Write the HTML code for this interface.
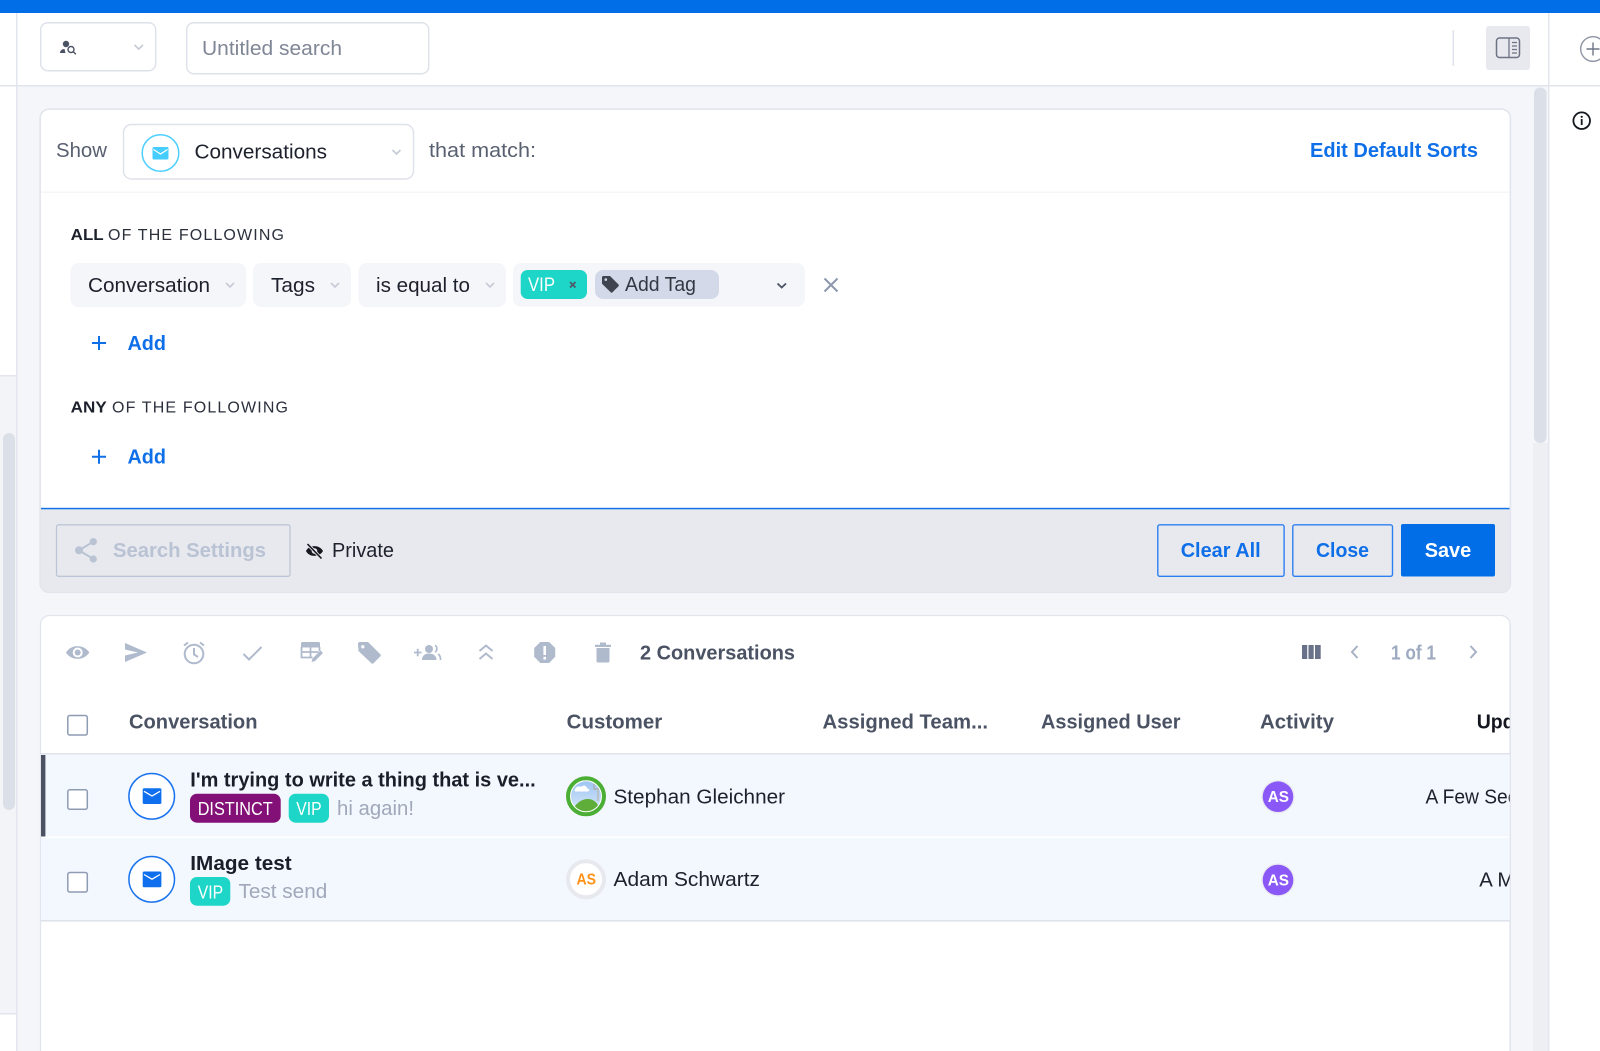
<!DOCTYPE html>
<html lang="en">
<head>
<meta charset="utf-8">
<title>Search</title>
<style>
html,body{margin:0;padding:0;width:1600px;height:1051px;overflow:hidden;background:#fff}
svg{display:block;position:absolute;left:0;top:0}
text{font-family:"Liberation Sans",sans-serif;font-size:20px;fill:#1d212c;letter-spacing:0}
.b{font-weight:700}
.blue{fill:#0e6fe8;font-weight:700}
.hd{font-weight:700;fill:#4a5263}
.sm{font-size:16px}
.tag{font-size:18.5px;fill:#fff}
.muted{fill:#a0a8ba}
.chev{fill:none;stroke:#c5cad5;stroke-width:1.6}
.ic{fill:#b0bacd}
.is{fill:none;stroke:#b0bacd;stroke-width:2}
</style>
</head>
<body>
<svg width="1600" height="1051" viewBox="0 0 1600 1051" xmlns="http://www.w3.org/2000/svg">
<defs>
<clipPath id="tbl"><rect x="41" y="616" width="1469" height="435"/></clipPath>
<clipPath id="av"><circle cx="586" cy="796.3" r="15"/></clipPath>
<linearGradient id="sky" x1="0" y1="0" x2="0" y2="1"><stop offset="0" stop-color="#9cc4f2"/><stop offset="1" stop-color="#d9e8fa"/></linearGradient>
</defs>

<rect width="1600" height="1051" fill="#fff"/>
<!-- main background -->
<rect x="17" y="86" width="1531" height="965" fill="#f5f6fa"/>
<!-- left column -->
<rect x="0" y="376" width="16" height="637" fill="#f3f4f7"/>
<rect x="0" y="375" width="16" height="1.5" fill="#e3e6ee"/>
<rect x="0" y="1013" width="16" height="1.5" fill="#e3e6ee"/>
<rect x="3" y="433" width="12" height="377" rx="6" fill="#dbdfe8"/>
<rect x="16" y="13" width="1.5" height="1038" fill="#e3e6ee"/>
<!-- top bar -->
<rect width="1600" height="13" fill="#016ee8"/>
<!-- header line -->
<rect x="0" y="85" width="1600" height="1.5" fill="#e1e4ec"/>
<rect x="1548" y="13" width="1.5" height="1038" fill="#e3e6ee"/>

<!-- header controls -->
<rect x="40.7" y="22.7" width="115" height="48" rx="7" fill="#fff" stroke="#dfe2ea" stroke-width="1.5"/>
<circle cx="66" cy="44" r="3.2" fill="#4a5263"/>
<path d="M60 53c0-2.500 2-4 4.500-4l1 4z" fill="#4a5263"/>
<circle cx="71" cy="49.5" r="3" fill="none" stroke="#4a5263" stroke-width="1.400"/>
<path d="M73.300 51.800l2.500 2.500" stroke="#4a5263" stroke-width="1.400" fill="none"/>
<polyline class="chev" points="134.500,45 138.700,49 143,45"/>
<rect x="186.7" y="22.7" width="242" height="51" rx="7" fill="#fff" stroke="#dfe2ea" stroke-width="1.5"/>
<text x="202" y="55" style="fill:#7f8695" textLength="140" lengthAdjust="spacingAndGlyphs">Untitled search</text>
<rect x="1452.500" y="30" width="1.500" height="36" fill="#dfe3ec"/>
<rect x="1486" y="26" width="44" height="44" rx="3" fill="#e8e9ef"/>
<rect x="1496.500" y="38" width="23" height="19.500" rx="3" fill="none" stroke="#6c7385" stroke-width="1.500"/>
<path d="M1509 38v19.500M1512 42.500h5M1512 46h5M1512 49.500h5M1512 53h5" stroke="#6c7385" stroke-width="1.300" fill="none"/>
<circle cx="1593" cy="49" r="12.300" fill="none" stroke="#8d94a3" stroke-width="1.400"/>
<path d="M1593 42.500v13M1586.500 49h13" stroke="#6f7686" stroke-width="1.400" fill="none"/>
<circle cx="1581.700" cy="120.700" r="8.300" fill="none" stroke="#15181f" stroke-width="1.800"/>
<circle cx="1581.700" cy="116.800" r="1.100" fill="#15181f"/>
<rect x="1580.800" y="119" width="1.800" height="6" fill="#15181f"/>

<!-- scrollbar -->
<rect x="1533" y="443" width="15" height="608" fill="#eeeff3"/>
<rect x="1534" y="87.500" width="12.500" height="355.500" rx="6" fill="#dbdfe8"/>

<!-- panel 1 -->
<rect x="40" y="109" width="1470.500" height="483.500" rx="9" fill="#e8e9ef" stroke="#e2e5ed" stroke-width="1.300"/>
<path d="M41 509V118a8 8 0 0 1 8-8H1501.500a8 8 0 0 1 8 8V509z" fill="#fff"/>
<rect x="41" y="191.500" width="1468.500" height="1.500" fill="#f5f6f9"/>
<rect x="41" y="507.800" width="1468.500" height="1.500" fill="#0f72e8"/>

<text x="56" y="157" style="fill:#596070" textLength="51" lengthAdjust="spacingAndGlyphs">Show</text>
<rect x="123.500" y="124.500" width="290" height="54.500" rx="8" fill="#fff" stroke="#dfe2ea" stroke-width="1.500"/>
<circle cx="160.500" cy="153" r="18.300" fill="#fff" stroke="#4dcfff" stroke-width="1.500"/>
<rect x="152.500" y="147" width="16" height="12.500" rx="1.500" fill="#45cdff"/>
<polyline points="153.500,149.500 160.500,154 167.500,149.500" fill="none" stroke="#fff" stroke-width="1.200"/>
<text x="194.500" y="158.500" textLength="132.500" lengthAdjust="spacingAndGlyphs">Conversations</text>
<polyline class="chev" points="392.500,150 396.500,154 400.500,150"/>
<text x="429" y="157" style="fill:#596070" textLength="107" lengthAdjust="spacingAndGlyphs">that match:</text>
<text x="1310" y="157" class="blue" textLength="168" lengthAdjust="spacingAndGlyphs">Edit Default Sorts</text>

<text x="70.700" y="240" class="b sm" textLength="33" lengthAdjust="spacingAndGlyphs">ALL</text>
<text x="108" y="240" class="sm" style="fill:#2b303c" textLength="176" lengthAdjust="spacing">OF THE FOLLOWING</text>

<!-- filter pills -->
<rect x="70.500" y="263" width="175.500" height="44" rx="8" fill="#f5f6fa"/>
<text x="88" y="292" textLength="122" lengthAdjust="spacingAndGlyphs">Conversation</text>
<polyline class="chev" points="226,283 230,287 234,283"/>
<rect x="253" y="263" width="98" height="44" rx="8" fill="#f5f6fa"/>
<text x="271" y="292" textLength="44" lengthAdjust="spacingAndGlyphs">Tags</text>
<polyline class="chev" points="331,283 335,287 339,283"/>
<rect x="358.500" y="263" width="147.500" height="44" rx="8" fill="#f5f6fa"/>
<text x="376" y="292" textLength="94" lengthAdjust="spacingAndGlyphs">is equal to</text>
<polyline class="chev" points="486,283 490,287 494,283"/>
<rect x="513" y="263" width="292" height="43.500" rx="8" fill="#f5f6fa"/>
<rect x="520.700" y="270" width="66.300" height="29" rx="7" fill="#1dd6c8"/>
<text x="528" y="291" class="tag" style="font-size:19px" textLength="27" lengthAdjust="spacingAndGlyphs">VIP</text>
<path d="M570 282l5.500 5.500M575.500 282l-5.500 5.500" stroke="#4f5a6b" stroke-width="1.800" fill="none"/>
<rect x="595" y="270" width="124" height="29" rx="8" fill="#d3d9e8"/>
<path d="M602 277.500a1.500 1.500 0 0 1 1.500-1.500h6.500l8.500 8.500a1.300 1.300 0 0 1 0 1.800l-6 6a1.300 1.300 0 0 1-1.800 0l-8.700-8.600z" fill="#40444f"/>
<circle cx="605.800" cy="279.600" r="1.300" fill="#d3d9e8"/>
<text x="625" y="291" style="fill:#333845" textLength="71" lengthAdjust="spacingAndGlyphs">Add Tag</text>
<polyline points="777.500,283.500 781.700,287.500 786,283.500" fill="none" stroke="#4a5263" stroke-width="1.800"/>
<path d="M824.500 278.500l13 13M837.500 278.500l-13 13" stroke="#8d97ad" stroke-width="2" fill="none"/>

<path d="M92 343h14M99 336v14" stroke="#0e6fe8" stroke-width="2" fill="none"/>
<text x="127.500" y="350" class="blue" textLength="38.500" lengthAdjust="spacingAndGlyphs">Add</text>

<text x="70.700" y="412.300" class="b sm" textLength="36" lengthAdjust="spacingAndGlyphs">ANY</text>
<text x="112" y="412.300" class="sm" style="fill:#2b303c" textLength="176" lengthAdjust="spacing">OF THE FOLLOWING</text>

<path d="M92 456.800h14M99 449.800v14" stroke="#0e6fe8" stroke-width="2" fill="none"/>
<text x="127.500" y="463.500" class="blue" textLength="38.500" lengthAdjust="spacingAndGlyphs">Add</text>

<!-- footer -->
<rect x="56.500" y="524.800" width="233.500" height="51.500" rx="2" fill="none" stroke="#bcc5d5" stroke-width="1.300"/>
<path d="M93.300 541.700L79 550.300L93.300 559" fill="none" stroke="#b9c3d4" stroke-width="2"/>
<circle cx="93.300" cy="541.700" r="3.600" fill="#b9c3d4"/>
<circle cx="79" cy="550.300" r="4" fill="#b9c3d4"/>
<circle cx="93.300" cy="559" r="3.600" fill="#b9c3d4"/>
<text x="113" y="557" class="b" style="fill:#b9c3d4" textLength="153" lengthAdjust="spacingAndGlyphs">Search Settings</text>
<path d="M306 551c3-6.500 13.500-6.500 17 0c-3.500 6.500-14 6.500-17 0z" fill="#15181f"/>
<circle cx="314.500" cy="551" r="2.800" fill="#e8e9ef"/>
<path d="M308 544.500l13 13.500" stroke="#e8e9ef" stroke-width="3.200" fill="none"/>
<path d="M307.500 544l14 14.500" stroke="#15181f" stroke-width="1.600" fill="none"/>
<text x="332" y="557" textLength="62" lengthAdjust="spacingAndGlyphs">Private</text>
<rect x="1157.800" y="524.800" width="126.300" height="51.500" rx="2" fill="none" stroke="#2c7ff0" stroke-width="1.400"/>
<text x="1180.700" y="557" class="blue" textLength="80" lengthAdjust="spacingAndGlyphs">Clear All</text>
<rect x="1292.800" y="524.800" width="99.700" height="51.500" rx="2" fill="none" stroke="#2c7ff0" stroke-width="1.400"/>
<text x="1316" y="557" class="blue" textLength="53" lengthAdjust="spacingAndGlyphs">Close</text>
<rect x="1401" y="524" width="94" height="52.500" rx="2" fill="#016ee8"/>
<text x="1424.700" y="557" class="b" style="fill:#fff" textLength="46.500" lengthAdjust="spacingAndGlyphs">Save</text>

<!-- panel 2 -->
<path d="M40.500 1060V624.500a9 9 0 0 1 9-9H1501a9 9 0 0 1 9 9V1060z" fill="#fff" stroke="#e2e5ed" stroke-width="1.300"/>

<!-- toolbar icons -->
<path d="M66 652.500C71 644 84 644 89.300 652.500C84 661 71 661 66 652.500Z" class="ic"/>
<circle cx="77.700" cy="652.500" r="5" fill="#fff"/>
<circle cx="77.700" cy="652.500" r="3" class="ic"/>
<path d="M125 643L147 652.500L125 662V655.500L138 652.500L125 649.500Z" class="ic"/>
<circle cx="194" cy="654" r="9.300" class="is"/>
<path d="M194 648v6.500l4 2.500M184 645.500l4-3M204 645.500l-4-3" class="is"/>
<path d="M243.500 654l5.500 5.500l12.500-12.500" class="is"/>
<path d="M301 643.500a1.500 1.500 0 0 1 1.500-1.500h16a1.500 1.500 0 0 1 1.500 1.500v4h-19z" class="ic"/>
<path d="M301.500 647v10.500h11M301.500 652h17M310.500 647v10.500M319.500 647v4" class="is" style="stroke-width:1.800"/>
<path d="M311.500 662l1-3.500l8-8l2.500 2.500l-8 8z" class="ic"/>
<path d="M358 644a2 2 0 0 1 2-2h8l12.300 12.300a1.500 1.500 0 0 1 0 2.100l-6.800 6.800a1.500 1.500 0 0 1-2.100 0L358.500 651z" class="ic"/>
<circle cx="362.800" cy="646.800" r="1.700" fill="#fff"/>
<path d="M414 652.500h7.500M417.700 648.800v7.500" class="is" style="stroke-width:1.800"/>
<circle cx="429" cy="649" r="4" class="ic"/>
<path d="M422 660c0-4.500 3-6.500 7-6.500s7.500 2 7.500 6.500z" class="ic"/>
<path d="M435 645.500c2.500.8 2.500 5.500 0 6.500M438 654c2 1 2.600 3.500 2.600 6" class="is" style="stroke-width:1.700"/>
<path d="M479.500 651l6.500-5.500l6.500 5.500M479.500 659l6.500-5.500l6.500 5.500" class="is"/>
<polygon points="540.300,642 549.100,642 555.200,648 555.200,656.800 549.100,663 540.300,663 534.200,656.800 534.200,648" class="ic"/>
<rect x="543.400" y="646" width="2.600" height="9" fill="#fff"/>
<rect x="543.400" y="656.800" width="2.600" height="2.700" fill="#fff"/>
<path d="M595 644.700h16v2.300h-16zM600 642.500h6v2.500h-6z" class="ic"/>
<path d="M596.500 648h13v13a1.500 1.500 0 0 1-1.500 1.500h-10a1.500 1.500 0 0 1-1.500-1.500z" class="ic"/>
<text x="640" y="659.500" class="hd" textLength="155" lengthAdjust="spacingAndGlyphs">2 Conversations</text>

<rect x="1302" y="645" width="5.200" height="14" fill="#697288"/>
<rect x="1308.500" y="645" width="5.200" height="14" fill="#697288"/>
<rect x="1315" y="645" width="5.700" height="14" fill="#697288"/>
<polyline points="1357.500,646 1352,652 1357.500,658" fill="none" stroke="#a7b1c4" stroke-width="2"/>
<text x="1391" y="659.500" class="b" style="fill:#9eaabf" textLength="45" lengthAdjust="spacingAndGlyphs">1 of 1</text>
<polyline points="1470.500,646 1476,652 1470.500,658" fill="none" stroke="#a7b1c4" stroke-width="2"/>

<!-- table -->
<g clip-path="url(#tbl)">
<rect x="67.800" y="715.500" width="19.500" height="19.500" rx="2" fill="#fff" stroke="#8f9bb3" stroke-width="1.500"/>
<text x="129" y="728.300" class="hd" textLength="128.500" lengthAdjust="spacingAndGlyphs">Conversation</text>
<text x="566.700" y="728.300" class="hd" textLength="95.500" lengthAdjust="spacingAndGlyphs">Customer</text>
<text x="822.500" y="728.300" class="hd" textLength="165.500" lengthAdjust="spacingAndGlyphs">Assigned Team...</text>
<text x="1041" y="728.300" class="hd" textLength="139.500" lengthAdjust="spacingAndGlyphs">Assigned User</text>
<text x="1260" y="728.300" class="hd" textLength="74" lengthAdjust="spacingAndGlyphs">Activity</text>
<text x="1476.700" y="728.300" class="b" style="fill:#14171f" textLength="78" lengthAdjust="spacingAndGlyphs">Updated</text>

<rect x="41" y="753" width="1469" height="1.600" fill="#dfe3ec"/>
<rect x="41" y="754.600" width="1469" height="82" fill="#f3f7fe"/>
<rect x="41" y="836.600" width="1469" height="1.500" fill="#fff"/>
<rect x="41" y="838" width="1469" height="82" fill="#f3f7fe"/>
<rect x="41" y="920" width="1469" height="1.600" fill="#dfe3ec"/>
<rect x="41" y="755" width="4.400" height="81.500" fill="#4b5262"/>

<!-- row 1 -->
<rect x="67.800" y="789.800" width="19.500" height="19.500" rx="2" fill="#fff" stroke="#8f9bb3" stroke-width="1.500"/>
<circle cx="151.700" cy="796.300" r="22.800" fill="#fff" stroke="#1a73ee" stroke-width="1.500"/>
<rect x="142.700" y="788.300" width="18.700" height="15.700" rx="1.500" fill="#0f6fec"/>
<polyline points="144,791.300 152,796 160,791.300" fill="none" stroke="#fff" stroke-width="1.300"/>
<text x="190.300" y="786.700" class="b" style="fill:#1a1e29" textLength="345.400" lengthAdjust="spacingAndGlyphs">I'm trying to write a thing that is ve...</text>
<rect x="190" y="793.700" width="90.700" height="29" rx="7" fill="#831076"/>
<text x="197.700" y="815" class="tag" textLength="75" lengthAdjust="spacingAndGlyphs">DISTINCT</text>
<rect x="288.700" y="793.700" width="40.300" height="29" rx="7" fill="#1dd6c8"/>
<text x="296.300" y="815" class="tag" textLength="25.400" lengthAdjust="spacingAndGlyphs">VIP</text>
<text x="337" y="815" class="muted" textLength="77" lengthAdjust="spacingAndGlyphs">hi again!</text>

<circle cx="586" cy="796.300" r="18" fill="#fff" stroke="#4caf35" stroke-width="4"/>
<g clip-path="url(#av)">
<rect x="570" y="780" width="32" height="32" fill="url(#sky)"/>
<path d="M575 790c0-3 4-4.500 6-3c2-2.500 6-1.500 6 1.500c2.500 0 3 2.500 1 3h-12c-1.500 0-2-1-1-1.500z" fill="#fff"/>
<path d="M572 812c3-9 10-13 16-13c5 0 8 3 10 6l-3 7z" fill="#5fae3a"/>
<path d="M594 781l8 8v-9z" fill="#fff"/>
<path d="M594 781v8h8" fill="none" stroke="#a8a8a8" stroke-width="1.200"/>
<path d="M598 789v12" stroke="#b9b9b9" stroke-width="1.500"/>
</g>
<text x="613.500" y="803.300" textLength="171.500" lengthAdjust="spacingAndGlyphs">Stephan Gleichner</text>

<circle cx="1278" cy="796.700" r="16.700" fill="#e9eaf0"/>
<circle cx="1278" cy="796.700" r="15.300" fill="#8a58f7"/>
<text x="1267.700" y="802.200" class="b" style="fill:#fff;font-size:16px" textLength="21.300" lengthAdjust="spacingAndGlyphs">AS</text>
<text x="1425.500" y="803.300" textLength="172" lengthAdjust="spacingAndGlyphs">A Few Seconds Ago</text>

<!-- row 2 -->
<rect x="67.800" y="872.500" width="19.500" height="19.500" rx="2" fill="#fff" stroke="#8f9bb3" stroke-width="1.500"/>
<circle cx="151.700" cy="879.300" r="22.800" fill="#fff" stroke="#1a73ee" stroke-width="1.500"/>
<rect x="142.700" y="871.500" width="18.700" height="15.700" rx="1.500" fill="#0f6fec"/>
<polyline points="144,874.500 152,879.200 160,874.500" fill="none" stroke="#fff" stroke-width="1.300"/>
<text x="190.300" y="870" class="b" style="fill:#1a1e29" textLength="101.400" lengthAdjust="spacingAndGlyphs">IMage test</text>
<rect x="190" y="877" width="40.300" height="28.700" rx="7" fill="#1dd6c8"/>
<text x="197.700" y="898.300" class="tag" textLength="25.400" lengthAdjust="spacingAndGlyphs">VIP</text>
<text x="238.500" y="898" class="muted" textLength="88.800" lengthAdjust="spacingAndGlyphs">Test send</text>

<circle cx="586" cy="879.300" r="18" fill="#fff" stroke="#e8e9ef" stroke-width="4"/>
<text x="576.500" y="884.500" class="b" style="fill:#ff9216;font-size:15.5px" textLength="19.500" lengthAdjust="spacingAndGlyphs">AS</text>
<text x="613.500" y="886" textLength="146.500" lengthAdjust="spacingAndGlyphs">Adam Schwartz</text>

<circle cx="1278" cy="880" r="16.700" fill="#e9eaf0"/>
<circle cx="1278" cy="880" r="15.300" fill="#8a58f7"/>
<text x="1267.700" y="885.500" class="b" style="fill:#fff;font-size:16px" textLength="21.300" lengthAdjust="spacingAndGlyphs">AS</text>
<text x="1479.300" y="886.500" textLength="120" lengthAdjust="spacingAndGlyphs">A Minute Ago</text>
</g>
<rect x="1509.700" y="625" width="1.300" height="426" fill="#e2e5ed"/>
</svg>
</body>
</html>
